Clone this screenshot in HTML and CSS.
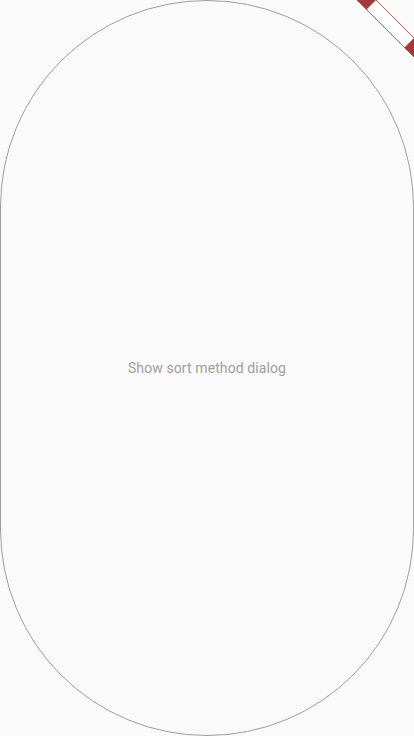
FILE: index.html
```html
<!DOCTYPE html>
<html>
<head>
<meta charset="utf-8">
<link rel="stylesheet" href="styles.css">
</head>
<body>
<div class="screen">
  <div class="stadium">
    <span class="label">Show sort method dialog</span>
  </div>
  <svg class="banner" width="60" height="60" viewBox="0 0 60 60">
    <polygon points="22,0 60,38 60,57 3,0" fill="#ffffff"/>
    <line x1="22" y1="0" x2="60" y2="38" stroke="#a83838" stroke-width="0.8"/>
    <line x1="3" y1="0" x2="60" y2="57" stroke="#a83838" stroke-width="0.8"/>
    <polygon points="3,0 22,0 12.5,9.5" fill="#a83838"/>
    <polygon points="60,38 50.5,47.5 60,57" fill="#a83838"/>
  </svg>
</div>
</body>
</html>
```
FILE: styles.css
```css
html, body {
  margin: 0;
  padding: 0;
  background: #fafafa;
}
.screen {
  position: relative;
  width: 414px;
  height: 736px;
  overflow: hidden;
}
.stadium {
  box-sizing: border-box;
  width: 414px;
  height: 736px;
  border: 1px solid #9e9e9e;
  border-radius: 207px;
  display: flex;
  align-items: center;
  justify-content: center;
}
.label {
  font-family: Roboto, sans-serif;
  font-size: 14px;
  color: #9e9e9e;
  letter-spacing: 0.1px;
}
.banner {
  position: absolute;
  top: 0;
  right: 0;
}
```
